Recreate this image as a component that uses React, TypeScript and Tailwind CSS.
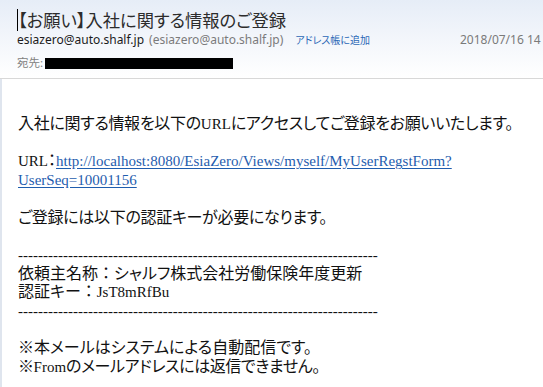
const sans = "font-['Noto_Sans','Noto_Sans_CJK_JP',sans-serif]";
const dashes = "------------------------------------------------------------------------";

export default function App() {
  return (
    <div className="w-[543px] h-[387px] overflow-hidden bg-white">
      <header className="h-[79px] border-b border-[#d8d8d8] bg-gradient-to-b from-[#e6edf7] via-[#f3f6fb] to-white pl-[17px] pt-[8px] flex flex-col">
        <div className="flex items-center h-[24px]">
          <span className="w-px h-[22px] bg-black" />
          <h1 className="font-['Noto_Sans_CJK_JP',sans-serif] text-[17.3px] leading-[24px] text-[#2c2c2c] [font-feature-settings:'palt'] whitespace-nowrap">
            【お願い】入社に関する情報のご登録
          </h1>
        </div>
        <div className={`flex items-center h-[16px] text-[12px] leading-[16px] whitespace-nowrap ${sans}`}>
          <span className="text-[#1b1b1b]">esiazero@auto.shalf.jp</span>
          <span className="ml-[5px] text-[#7b7b7b]">(esiazero@auto.shalf.jp)</span>
          <a className="ml-[12px] text-[10px] text-[#2a67b6] [font-feature-settings:'palt']">アドレス帳に追加</a>
          <span className="ml-[90px] shrink-0 text-[#7a7a7a]">2018/07/16 14</span>
        </div>
        <div className={`flex items-center h-[16px] mt-[7px] text-[11.5px] leading-[16px] text-[#808080] ${sans}`}>
          <span>宛先:</span>
          <span className="ml-[2px] inline-block w-[188px] h-[11px] bg-black" />
        </div>
      </header>

      <main className="border-l-2 border-[#dfe5ee] h-[308px] pl-[16px] pt-[36px] font-['Liberation_Serif','Noto_Sans_CJK_JP',serif] text-[16px] leading-[18.7px] text-[#111] [font-feature-settings:'palt'] whitespace-nowrap">
        <p className="tracking-[-0.3px]">
          入社に関する情報を以下の<span className="text-[15px] tracking-normal">URL</span>にアクセスしてご登録をお願いいたします。
        </p>
        <p>&nbsp;</p>
        <p>
          <span className="text-[15px]">URL</span>：
          <a className="text-[15px] text-[#1f5dae] underline underline-offset-2">
            http://localhost:8080/EsiaZero/Views/myself/MyUserRegstForm?
            <br />
            UserSeq=10001156
          </a>
        </p>
        <p>&nbsp;</p>
        <p className="tracking-[-0.3px]">ご登録には以下の認証キーが必要になります。</p>
        <p>&nbsp;</p>
        <p className="text-[15px]">{dashes}</p>
        <p>
          依頼主名称<span className="[font-feature-settings:normal]">：</span>シャルフ株式会社労働保険年度更新
        </p>
        <p>
          認証キー<span className="[font-feature-settings:normal]">：</span>
          <span className="text-[15px]">JsT8mRfBu</span>
        </p>
        <p className="text-[15px]">{dashes}</p>
        <p>&nbsp;</p>
        <p>※本メールはシステムによる自動配信です。</p>
        <p className="tracking-[-0.4px]">
          ※<span className="text-[15px] tracking-normal">From</span>のメールアドレスには返信できません。
        </p>
      </main>
    </div>
  );
}
